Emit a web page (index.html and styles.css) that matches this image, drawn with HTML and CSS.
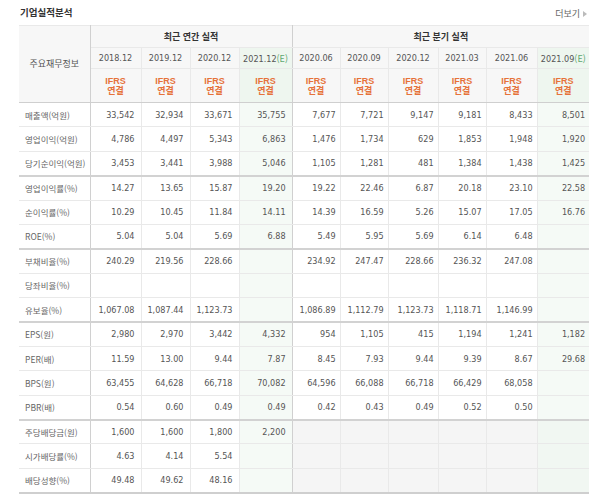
FILE: index.html
```html
<!DOCTYPE html>
<html lang="ko">
<head>
<meta charset="utf-8">
<title>기업실적분석</title>
<link rel="stylesheet" href="styles.css">
</head>
<body>
<div class="wrap">
  <div class="top">
    <h3 class="title">기업실적분석</h3>
    <a class="more" href="#">더보기<svg class="arr" width="4" height="6" viewBox="0 0 4 6"><path d="M0 0 L4 3 L0 6 Z" fill="#bbb"/></svg></a>
  </div>
  <table class="fin">
    <colgroup>
      <col class="c-lbl"><col class="c51"><col class="c49"><col class="c49"><col class="c53">
      <col class="c48"><col class="c48"><col class="c50"><col class="c48"><col class="c51"><col class="c52">
    </colgroup>
    <thead>
      <tr class="h1">
        <th class="lbl-h sep" rowspan="3">주요재무정보</th>
        <th class="sect sep" colspan="4">최근 연간 실적</th>
        <th class="sect" colspan="6">최근 분기 실적</th>
      </tr>
      <tr class="h2">
        <th>2018.12</th><th>2019.12</th><th>2020.12</th><th class="est sep">2021.12<span class="e">(E)</span></th>
        <th>2020.06</th><th>2020.09</th><th>2020.12</th><th>2021.03</th><th>2021.06</th><th class="est">2021.09<span class="e">(E)</span></th>
      </tr>
      <tr class="h3">
        <th><span class="ifrs">IFRS<br>연결</span></th><th><span class="ifrs">IFRS<br>연결</span></th><th><span class="ifrs">IFRS<br>연결</span></th><th class="est sep"><span class="ifrs">IFRS<br>연결</span></th>
        <th><span class="ifrs">IFRS<br>연결</span></th><th><span class="ifrs">IFRS<br>연결</span></th><th><span class="ifrs">IFRS<br>연결</span></th><th><span class="ifrs">IFRS<br>연결</span></th><th><span class="ifrs">IFRS<br>연결</span></th><th class="est"><span class="ifrs">IFRS<br>연결</span></th>
      </tr>
    </thead>
    <tbody>
      <tr><th class="lbl sep">매출액(억원)</th><td>33,542</td><td>32,934</td><td>33,671</td><td class="est sep">35,755</td><td>7,677</td><td>7,721</td><td>9,147</td><td>9,181</td><td>8,433</td><td class="est">8,501</td></tr>
      <tr><th class="lbl sep">영업이익(억원)</th><td>4,786</td><td>4,497</td><td>5,343</td><td class="est sep">6,863</td><td>1,476</td><td>1,734</td><td>629</td><td>1,853</td><td>1,948</td><td class="est">1,920</td></tr>
      <tr class="gend"><th class="lbl sep">당기순이익(억원)</th><td>3,453</td><td>3,441</td><td>3,988</td><td class="est sep">5,046</td><td>1,105</td><td>1,281</td><td>481</td><td>1,384</td><td>1,438</td><td class="est">1,425</td></tr>
      <tr><th class="lbl sep">영업이익률(%)</th><td>14.27</td><td>13.65</td><td>15.87</td><td class="est sep">19.20</td><td>19.22</td><td>22.46</td><td>6.87</td><td>20.18</td><td>23.10</td><td class="est">22.58</td></tr>
      <tr><th class="lbl sep">순이익률(%)</th><td>10.29</td><td>10.45</td><td>11.84</td><td class="est sep">14.11</td><td>14.39</td><td>16.59</td><td>5.26</td><td>15.07</td><td>17.05</td><td class="est">16.76</td></tr>
      <tr class="gend"><th class="lbl sep">ROE(%)</th><td>5.04</td><td>5.04</td><td>5.69</td><td class="est sep">6.88</td><td>5.49</td><td>5.95</td><td>5.69</td><td>6.14</td><td>6.48</td><td class="est"></td></tr>
      <tr><th class="lbl sep">부채비율(%)</th><td>240.29</td><td>219.56</td><td>228.66</td><td class="est sep"></td><td>234.92</td><td>247.47</td><td>228.66</td><td>236.32</td><td>247.08</td><td class="est"></td></tr>
      <tr><th class="lbl sep">당좌비율(%)</th><td></td><td></td><td></td><td class="est sep"></td><td></td><td></td><td></td><td></td><td></td><td class="est"></td></tr>
      <tr class="gend"><th class="lbl sep">유보율(%)</th><td>1,067.08</td><td>1,087.44</td><td>1,123.73</td><td class="est sep"></td><td>1,086.89</td><td>1,112.79</td><td>1,123.73</td><td>1,118.71</td><td>1,146.99</td><td class="est"></td></tr>
      <tr><th class="lbl sep">EPS(원)</th><td>2,980</td><td>2,970</td><td>3,442</td><td class="est sep">4,332</td><td>954</td><td>1,105</td><td>415</td><td>1,194</td><td>1,241</td><td class="est">1,182</td></tr>
      <tr><th class="lbl sep">PER(배)</th><td>11.59</td><td>13.00</td><td>9.44</td><td class="est sep">7.87</td><td>8.45</td><td>7.93</td><td>9.44</td><td>9.39</td><td>8.67</td><td class="est">29.68</td></tr>
      <tr><th class="lbl sep">BPS(원)</th><td>63,455</td><td>64,628</td><td>66,718</td><td class="est sep">70,082</td><td>64,596</td><td>66,088</td><td>66,718</td><td>66,429</td><td>68,058</td><td class="est"></td></tr>
      <tr class="gend"><th class="lbl sep">PBR(배)</th><td>0.54</td><td>0.60</td><td>0.49</td><td class="est sep">0.49</td><td>0.42</td><td>0.43</td><td>0.49</td><td>0.52</td><td>0.50</td><td class="est"></td></tr>
      <tr><th class="lbl sep">주당배당금(원)</th><td>1,600</td><td>1,600</td><td>1,800</td><td class="est sep">2,200</td><td class="na"></td><td class="na"></td><td class="na"></td><td class="na"></td><td class="na"></td><td class="est na-e"></td></tr>
      <tr><th class="lbl sep">시가배당률(%)</th><td>4.63</td><td>4.14</td><td>5.54</td><td class="est sep"></td><td class="na"></td><td class="na"></td><td class="na"></td><td class="na"></td><td class="na"></td><td class="est na-e"></td></tr>
      <tr class="last"><th class="lbl sep">배당성향(%)</th><td>49.48</td><td>49.62</td><td>48.16</td><td class="est sep"></td><td class="na"></td><td class="na"></td><td class="na"></td><td class="na"></td><td class="na"></td><td class="est na-e"></td></tr>
    </tbody>
  </table>
</div>
</body>
</html>
```

FILE: styles.css
```css
* { box-sizing: border-box; }
html, body { margin: 0; padding: 0; background: #fff; }
body {
  font-family: "Noto Sans CJK KR", "Liberation Sans", sans-serif;
  color: #555;
}
.wrap {
  width: 600px;
  padding: 0 11px 0 19px;
}
.top {
  height: 25px;
  display: flex;
  align-items: flex-start;
  justify-content: space-between;
}
.title {
  margin: 5px 0 0 1px;
  font-size: 9.5px;
  line-height: 14px;
  font-weight: bold;
  color: #333;
}
.more {
  margin: 8px 2px 0 0;
  font-size: 9px;
  line-height: 12px;
  color: #666;
  text-decoration: none;
  display: flex;
  align-items: center;
  gap: 3px;
}
.fin {
  width: 570px;
  table-layout: fixed;
  border-collapse: collapse;
  border-top: 1px solid #c9c9c9;
  border-bottom: 2px solid #cfcfcf;
}
.c-lbl { width: 71px; }
.c48 { width: 48px; }
.c49 { width: 49px; }
.c50 { width: 50px; }
.c51 { width: 51px; }
.c52 { width: 52px; }
.c53 { width: 53px; }

.fin th, .fin td {
  padding: 0;
  border: 1px solid #e9e9e9;
  font-weight: normal;
}
.fin tr > :first-child { border-left: 0; }
.fin tr > :last-child { border-right: 0; }

.fin thead th {
  background: #f7f7f7;
  text-align: center;
  color: #555;
}
.fin .h1 th { height: 22px; font-size: 9px; line-height: 12px; }
.fin .h1 .sect { font-weight: bold; color: #333; }
.fin .h1 .lbl-h { font-size: 9px; color: #555; border-bottom: 1px solid #cfcfcf; }
.fin .h2 th {
  height: 21px;
  font-family: "DejaVu Sans Condensed", "Liberation Sans", sans-serif;
  font-size: 9px;
  color: #555;
  white-space: nowrap;
}
.fin .h3 th { height: 34px; border-bottom: 1px solid #cfcfcf; }
.ifrs {
  display: block;
  font-family: "Liberation Sans", "Noto Sans CJK KR", sans-serif;
  font-weight: bold;
  font-size: 9px;
  line-height: 10px;
  color: #e6723a;
}
.e { color: #5fa86f; font-family: "Noto Sans CJK KR", sans-serif; }
.fin thead th.est { background: #eef6ef; }

.fin tbody th, .fin tbody td { height: 24.4px; }
.fin tbody .lbl {
  text-align: left;
  padding-left: 6px;
  font-size: 8.5px;
  color: #666;
  white-space: nowrap;
  background: #fff;
}
.fin tbody td {
  text-align: right;
  padding-right: 6px;
  font-family: "DejaVu Sans Condensed", "Liberation Sans", sans-serif;
  font-size: 9px;
  color: #555;
  white-space: nowrap;
}
.fin tbody td:nth-child(n+6) { padding-right: 4px; }
.fin tbody td.est { background: #f5faf6; }
.fin tbody td.na { background: #f5f5f5; }
.fin tbody td.na-e { background: #f1f7f2; }
.fin .gend th, .fin .gend td { border-bottom: 2px solid #d2d2d2; }
.fin .last th, .fin .last td { border-bottom: 2px solid #cfcfcf; }
.fin .sep { border-right: 1px solid #d0d0d0; }
```
